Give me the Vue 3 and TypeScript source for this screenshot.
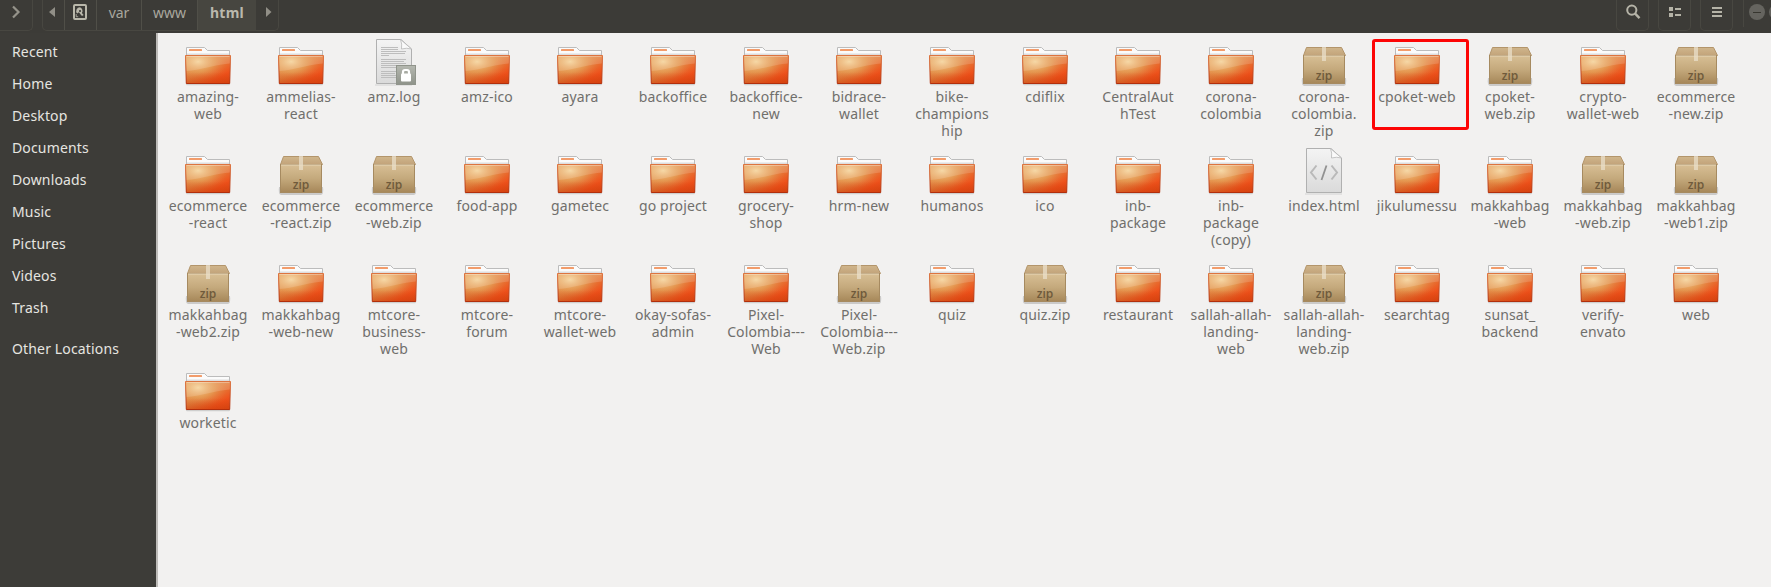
<script setup lang="ts">
type Kind = 'folder' | 'zip' | 'log' | 'html'
interface Entry { kind: Kind; lines: string[]; marked: boolean }

const names: string[] = [
  'amazing-|web', 'ammelias-|react', 'amz.log', 'amz-ico', 'ayara', 'backoffice', 'backoffice-|new', 'bidrace-|wallet',
  'bike-|champions|hip', 'cdiflix', 'CentralAut|hTest', 'corona-|colombia', 'corona-|colombia.|zip', 'cpoket-web',
  'cpoket-|web.zip', 'crypto-|wallet-web', 'ecommerce|-new.zip',
  'ecommerce|-react', 'ecommerce|-react.zip', 'ecommerce|-web.zip', 'food-app', 'gametec', 'go project', 'grocery-|shop',
  'hrm-new', 'humanos', 'ico', 'inb-|package', 'inb-|package|(copy)', 'index.html', 'jikulumessu', 'makkahbag|-web',
  'makkahbag|-web.zip', 'makkahbag|-web1.zip',
  'makkahbag|-web2.zip', 'makkahbag|-web-new', 'mtcore-|business-|web', 'mtcore-|forum', 'mtcore-|wallet-web',
  'okay-sofas-|admin', 'Pixel-|Colombia---|Web', 'Pixel-|Colombia---|Web.zip', 'quiz', 'quiz.zip', 'restaurant',
  'sallah-allah-|landing-|web', 'sallah-allah-|landing-|web.zip', 'searchtag', 'sunsat_|backend', 'verify-|envato', 'web',
  'worketic',
]

function kindOf(name: string): Kind {
  if (name.endsWith('zip')) return 'zip'
  if (name.endsWith('.log')) return 'log'
  if (name.endsWith('.html')) return 'html'
  return 'folder'
}

const entries: Entry[] = names.map((n) => ({ kind: kindOf(n), lines: n.split('|'), marked: n === 'cpoket-web' }))
const places: string[] = ['Recent', 'Home', 'Desktop', 'Documents', 'Downloads', 'Music', 'Pictures', 'Videos', 'Trash']
</script>

<template>
  <div class="window">
    <svg class="defs" width="0" height="0">
      <defs>
        <linearGradient id="fBase" x1="0" y1="0" x2="1" y2="1">
          <stop offset="0" stop-color="#e9aa62" /><stop offset=".45" stop-color="#e28742" />
          <stop offset=".78" stop-color="#ee511b" /><stop offset="1" stop-color="#e04a16" />
        </linearGradient>
        <radialGradient id="fGlow" cx=".28" cy=".22" r=".66">
          <stop offset="0" stop-color="#f5d298" /><stop offset=".55" stop-color="#e6a058" stop-opacity=".65" /><stop offset="1" stop-color="#e8743a" stop-opacity="0" />
        </radialGradient>
        <linearGradient id="fEdge" x1="0" y1="0" x2="0" y2="1">
          <stop offset="0" stop-color="#dd7440" /><stop offset="1" stop-color="#b22f0c" />
        </linearGradient>
        <linearGradient id="fShade" x1="0" y1="0" x2="0" y2="1">
          <stop offset=".6" stop-color="#c83a08" stop-opacity="0" /><stop offset="1" stop-color="#c83a08" stop-opacity=".5" />
        </linearGradient>
        <linearGradient id="paper" x1="0" y1="0" x2="0" y2="1">
          <stop offset="0" stop-color="#f4f4f4" /><stop offset="1" stop-color="#dadada" />
        </linearGradient>
        <linearGradient id="box" x1="0" y1="0" x2="0" y2="1">
          <stop offset="0" stop-color="#d8bf95" /><stop offset=".5" stop-color="#c4a97c" /><stop offset="1" stop-color="#a68759" />
        </linearGradient>
        <linearGradient id="lid" x1="0" y1="0" x2="0" y2="1">
          <stop offset="0" stop-color="#d0b68c" /><stop offset="1" stop-color="#c2a37a" />
        </linearGradient>
        <linearGradient id="lock" x1="0" y1="0" x2="0" y2="1">
          <stop offset="0" stop-color="#b5b8b0" /><stop offset="1" stop-color="#8f938a" />
        </linearGradient>
      </defs>
    </svg>

    <header class="bar">
      <div class="toggle">
        <svg width="10" height="14" viewBox="0 0 10 14"><path d="M2 1.5 7.500 7 2 12.5" fill="none" stroke="#95938a" stroke-width="2.200" /></svg>
      </div>
      <nav class="path">
        <div class="seg arrow"><svg width="6" height="10" viewBox="0 0 6 10"><path d="M6 0v10L0 5z" fill="#918f87" /></svg></div>
        <div class="seg disk">
          <svg width="14" height="16" viewBox="0 0 14 16">
            <rect x="1" y="1" width="12" height="14" rx="1" fill="none" stroke="#b9b7aa" stroke-width="2" />
            <path d="M7 3.2a3.9 3.9 0 0 0-2.9 6.4L6 8.2l1.8 2.6 1.2 1.2 1.6-.9-1.7-2.1A3.9 3.9 0 0 0 7 3.2z" fill="#b9b7aa" />
            <circle cx="7" cy="7" r="1.1" fill="#3c3b37" />
            <path d="M3.2 10v2.7h2" fill="none" stroke="#b9b7aa" stroke-width=".8" />
          </svg>
        </div>
        <div class="seg var">var</div>
        <div class="seg www">www</div>
        <div class="seg active">html</div>
        <div class="seg last"><svg width="6" height="10" viewBox="0 0 6 10"><path d="M0 0v10l5.5-5z" fill="#918f87" /></svg></div>
      </nav>
      <div class="tools">
        <div class="tool">
          <svg width="16" height="16" viewBox="0 0 16 16"><circle cx="6.800" cy="6.1" r="4.600" fill="none" stroke="#b5b3a7" stroke-width="2" /><path d="m9.9 9.4 4.600 4.800" stroke="#b5b3a7" stroke-width="2.4" /></svg>
        </div>
        <div class="tool">
          <svg width="16" height="16" viewBox="0 0 16 16"><path d="M2 3h4v4H2zM2 9h4v4H2zM8 4h6v2H8zM8 10h6v2H8z" fill="#b5b3a7" /></svg>
        </div>
        <div class="tool">
          <svg width="16" height="16" viewBox="0 0 16 16"><path d="M3 3h10v2H3zM3 7h10v2H3zM3 11h10v2H3z" fill="#b5b3a7" /></svg>
        </div>
      </div>
      <div class="controls">
        <span class="knob"><i class="dash"></i></span><span class="knob"></span>
      </div>
    </header>

    <div class="body">
      <aside class="side">
        <div v-for="p in places" :key="p" class="place">{{ p }}</div>
        <div class="place other">Other Locations</div>
      </aside>
      <main class="files">
        <div v-for="(e, i) in entries" :key="i" class="cell" :class="{ marked: e.marked }">
          <svg class="icon" width="48" height="48" viewBox="0 0 48 48">
            <template v-if="e.kind === 'folder'">
              <rect x="2" y="44.8" width="44" height="2.4" rx="1" fill="#000" opacity=".14" />
              <path d="M2.5 19V9.5h18l3 3h22V19z" fill="#fbfbfb" stroke="#bcbcbc" />
              <path d="M3 16.5h42" stroke="#dedede" stroke-width="2" />
              <rect x="5" y="11" width="13" height="2" rx=".5" fill="#f29c6b" />
              <path d="M1.5 17.5h45l-.8 28H2.3z" fill="url(#fBase)" />
              <path d="M1.5 17.5h45l-.8 28H2.3z" fill="url(#fGlow)" />
              <path d="M2 18h44v7.5C34 26 18 32 2 33z" fill="#fff" opacity=".15" />
              <path d="M1.5 17.5h45l-.8 28H2.3z" fill="url(#fShade)" stroke="url(#fEdge)" />
              <path d="M2.5 18.5h43" stroke="#fff" opacity=".3" />
            </template>
            <template v-else-if="e.kind === 'zip'">
              <path d="M2 40q-1 7 2 8h40q3-1 2-8z" fill="#000" opacity=".16" />
              <path d="M6.5 9.5h35l4 8h-42z" fill="url(#lid)" stroke="#b3956b" />
              <rect x="3.5" y="17.5" width="41" height="28" fill="url(#box)" stroke="#a68a60" />
              <path d="M4 18h40" stroke="#e6d6b8" />
              <rect x="22" y="9" width="4" height="14" fill="#eadfca" opacity=".75" />
              <text x="24" y="41.5" class="ziptext">zip</text>
            </template>
            <template v-else>
              <path d="M5 47h37" stroke="#000" opacity=".12" />
              <path d="M6.5 1.5h24.500l10.5 9.500v34.500h-35z" fill="url(#paper)" stroke="#b0b0b0" />
              <path d="M30.500 1.500l11 9.500q-5-1.500-10 0 .8-5-1-9.500z" fill="#fafafa" stroke="#b8b8b8" stroke-width=".8" />
              <template v-if="e.kind === 'log'">
                <path d="M11 9.500h17M11 11.500h17M11 13.500h25M11 15.500h24M11 17.500h8M11 21.500h25M11 23.500h23M11 25.500h25M11 27.500h19M11 29.500h19M11 33.500h15M11 35.500h14M11 37.500h15M11 39.500h15" stroke="#bdbdbd" />
                <rect x="26.500" y="27.500" width="19" height="19" fill="url(#lock)" stroke="#90948b" />
                <rect x="31" y="35.500" width="10" height="8" rx="1" fill="#fff" />
                <path d="M33 37v-3q0-2 2-2h2q2 0 2 2v3" fill="none" stroke="#fff" stroke-width="2.200" />
              </template>
              <template v-else>
                <path d="m16.500 18.500-5.500 7 5.500 7M31.500 18.500l5.500 7-5.500 7" fill="none" stroke="#b9b9b9" stroke-width="2" />
                <path d="m26.500 18.500-5 14.500" stroke="#919191" stroke-width="1.800" />
              </template>
            </template>
          </svg>
          <div class="label"><span v-for="(l, j) in e.lines" :key="j" class="line">{{ l }}</span></div>
        </div>
      </main>
    </div>
  </div>
</template>

<style>
html, body { margin: 0; overflow: hidden; }
</style>

<style scoped>
.window { width: 1771px; height: 587px; overflow: hidden; display: flex; flex-direction: column; background: #f2f1f0; font-family: "Noto Sans", "Open Sans", sans-serif; font-size: 14px; }
.defs { position: absolute; }
.bar { height: 33px; flex: none; display: flex; background: #3c3b37; color: #a9a79e; box-sizing: border-box; }
.toggle { box-sizing: border-box; width: 33px; height: 31px; border: 1px solid #484741; border-width: 0 1px 1px 0; border-radius: 0 0 5px 0; padding: 5px 0 0 11px; }
.toggle svg, .seg svg, .tool svg { display: block; }
.path { box-sizing: border-box; margin-left: 9px; width: 237px; height: 31px; display: flex; border: 1px solid #484741; border-top: 0; border-radius: 0 0 5px 5px; overflow: hidden; }
.seg { box-sizing: border-box; border-right: 1px solid #504f48; text-align: center; line-height: 26px; font-size: 14px; }
.arrow { width: 22px; padding: 7px 0 0 6px; }
.disk { width: 32px; padding: 4px 0 0 8px; }
.var { width: 45px; }
.www { width: 56px; }
.active { width: 58px; padding-left: 1px; background: #474640; font-weight: 700; color: #bab8ad; letter-spacing: .3px; border-right-color: #474640; }
.last { flex: 1; border: 0; padding: 7px 0 0 10px; }
.tools { margin-left: 1337px; display: flex; gap: 9px; }
.tool { box-sizing: border-box; width: 33px; height: 31px; border: 1px solid #484741; border-top: 0; border-radius: 0 0 5px 5px; padding: 4px 0 0 8px; }
.controls { margin-left: 10px; width: 28px; height: 27px; border-left: 1px solid #484741; display: flex; gap: 4px; padding: 4px 0 0 5px; box-sizing: border-box; overflow: hidden; }
.knob { flex: none; width: 16px; height: 16px; border-radius: 50%; background: #65645f; display: flex; align-items: center; justify-content: center; }
.dash { width: 8px; height: 1px; background: #37362f; }
.body { flex: 1; display: flex; min-height: 0; }
.side { box-sizing: border-box; width: 158px; flex: none; background: #3d3c38; border-right: 2px solid #bdbbb8; padding: 3px 0 0 12px; color: #e6e5e0; letter-spacing: .15px; }
.place { height: 32px; line-height: 32px; white-space: nowrap; }
.other { margin-top: 9px; }
.files { flex: 1; display: grid; grid-template-columns: repeat(17, 93px); grid-template-rows: 109px 109px 108px 109px; padding: 5px 0 0 3.500px; align-content: start; }
.cell { position: relative; display: flex; flex-direction: column; align-items: center; }
.icon { display: block; }
.label { margin-top: 2px; display: flex; flex-direction: column; align-items: center; color: #706f6c; letter-spacing: .15px; }
.line { white-space: pre; line-height: 17px; height: 17px; }
.ziptext { font: 600 12px "Open Sans", sans-serif; letter-spacing: 0; text-anchor: middle; fill: #6f5a3b; }
.marked::after { content: ""; position: absolute; left: 1px; top: 1px; width: 91px; height: 85px; border: 3px solid #fd0505; border-radius: 3px; }
</style>
